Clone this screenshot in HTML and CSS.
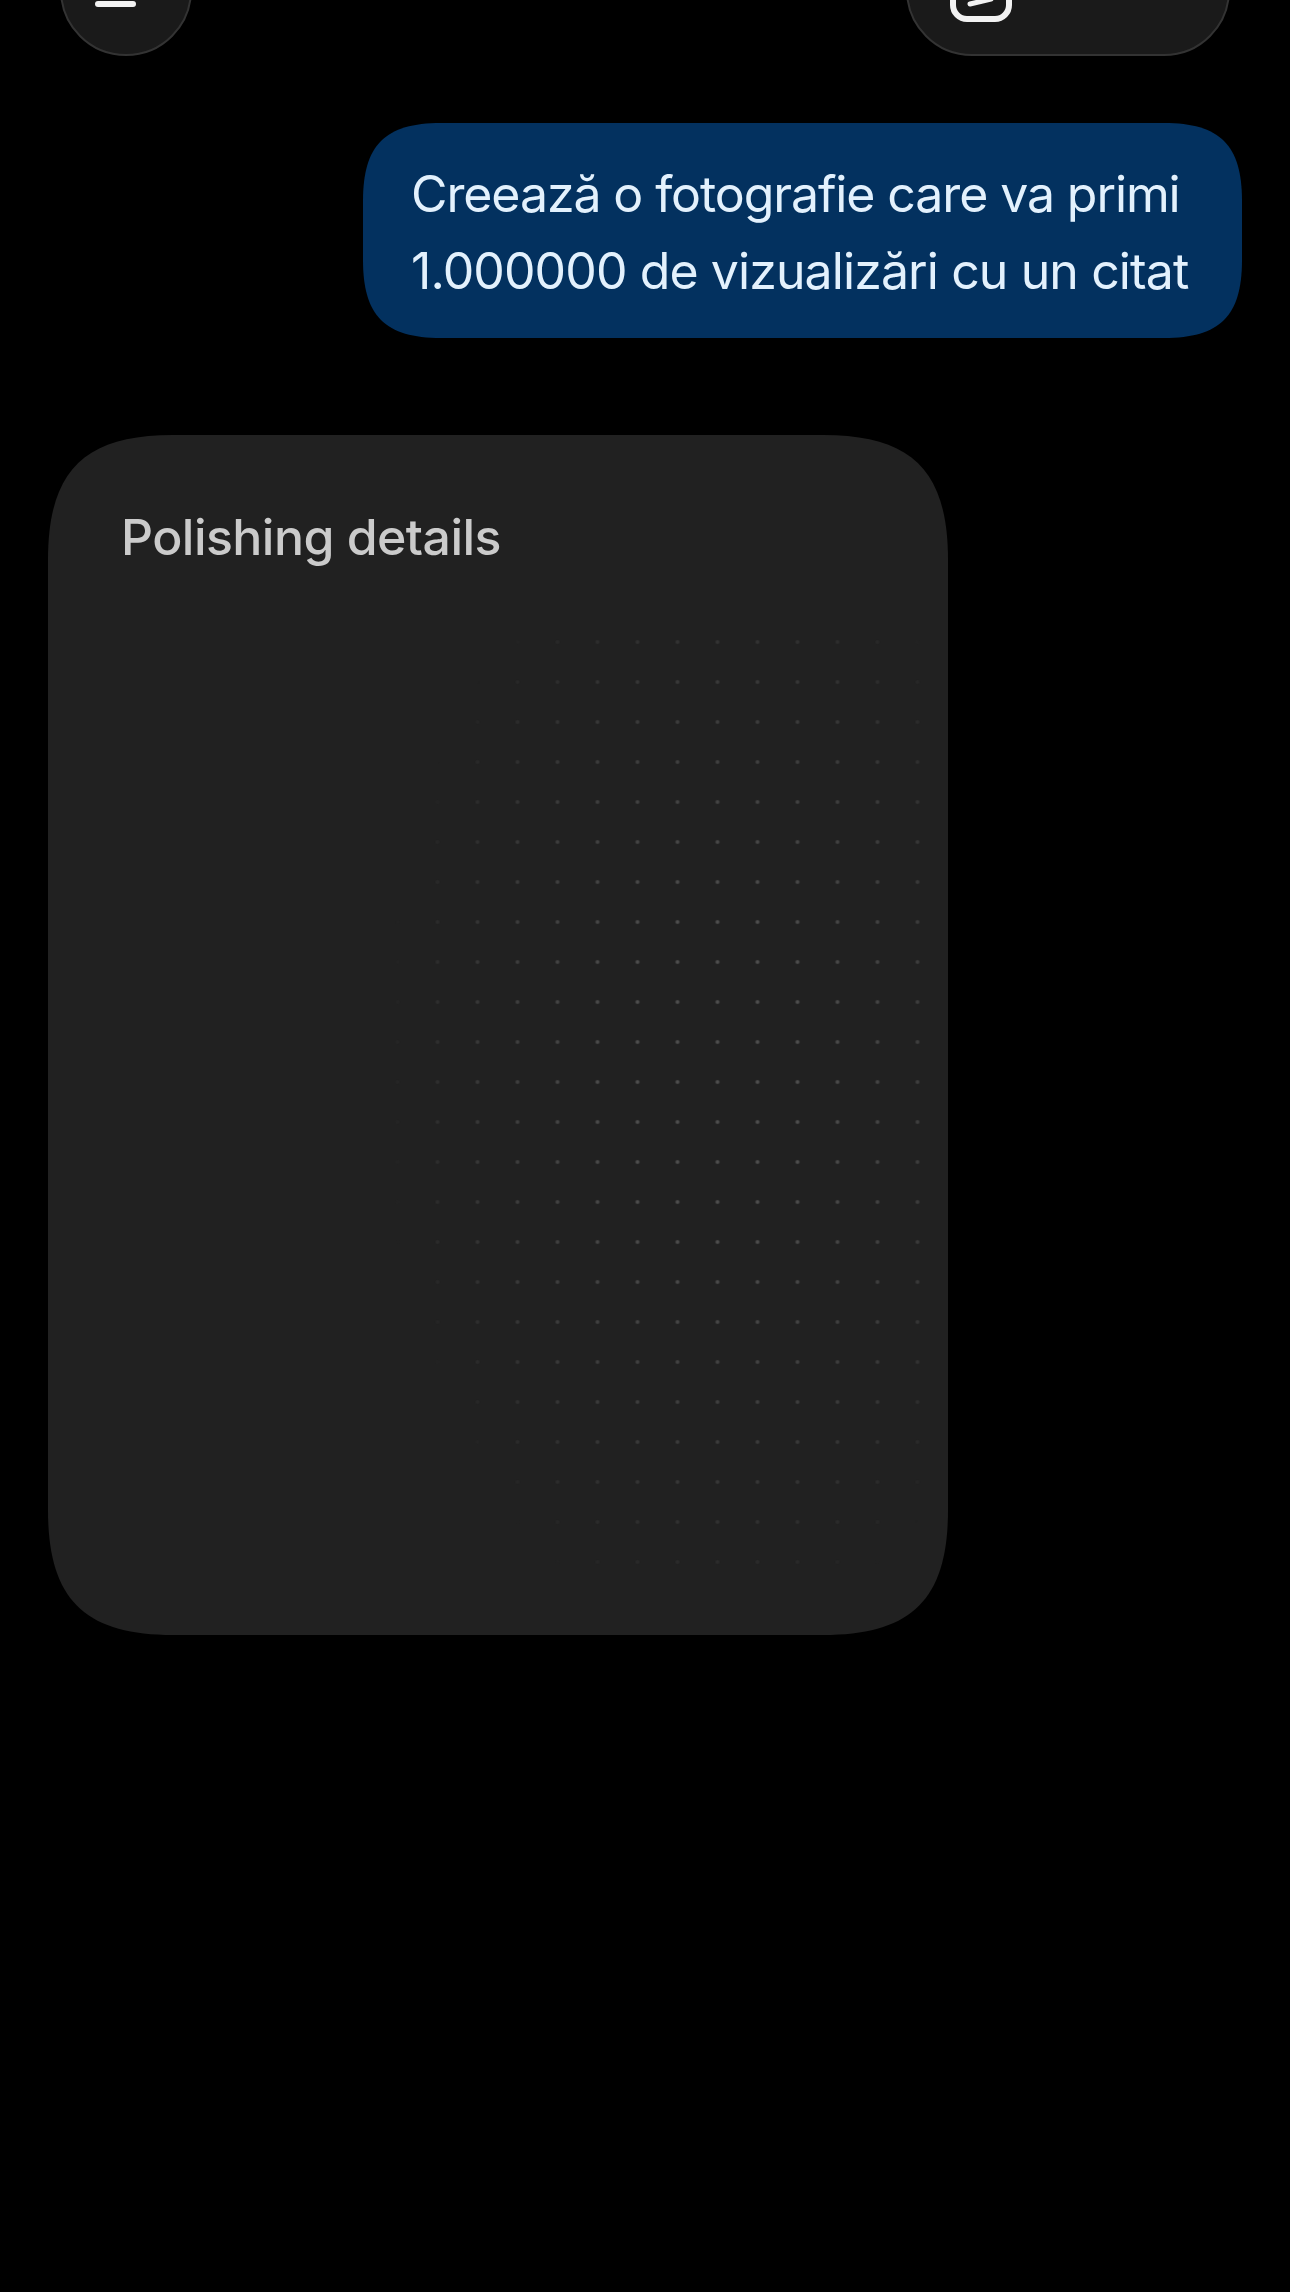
FILE: index.html
```html
<!DOCTYPE html>
<html lang="en">
	<head>
		<meta charset="UTF-8" />
		<meta name="viewport" content="width=device-width, initial-scale=1.0" />
		<title>Chat</title>
		<link rel="stylesheet" href="styles.css">
	</head>
	<body>
		<div class="top-bar">
			<button class="menu-btn" aria-label="Menu">
				<svg class="menu-icon" width="42" height="38" viewBox="0 0 42 38">
					<line x1="3" y1="3" x2="39" y2="3" />
					<line x1="3" y1="35" x2="38" y2="35" />
				</svg>
			</button>
			<button class="new-btn" aria-label="New chat">
				<svg class="new-icon" width="62" height="62" viewBox="0 0 62 62">
					<rect x="3" y="3" width="56" height="56" rx="14" />
					<path class="new-stroke" d="M20 44 L41 39" />
				</svg>
			</button>
		</div>

		<div class="chat">
			<div class="bubble">
				<div class="line-one">Creează o fotografie care va primi</div>
				<div class="line-two">1.000000 de vizualizări cu un citat</div>
			</div>
			<div class="card">
				<div class="card-title">Polishing details</div>
				<div class="dots"></div>
			</div>
		</div>
	</body>
</html>
```

FILE: styles.css
```css
html,
body {
	height: 100%;
}
body {
	margin: 0;
	background-color: #000;
	font-family: Inter, "Noto Sans", sans-serif;
	overflow: hidden;
}
button {
	padding: 0;
	margin: 0;
	background-color: #1a1a1a;
	border: 2px solid #333;
	box-sizing: border-box;
}
.top-bar {
	display: flex;
	justify-content: space-between;
	align-items: flex-end;
	height: 132px;
	margin-top: -76px;
	padding: 0 60px;
}
.menu-btn {
	display: flex;
	align-items: flex-end;
	width: 132px;
	height: 132px;
	padding: 0 0 47px 33px;
	border-radius: 50%;
}
.menu-icon line {
	stroke: #f2f2f2;
	stroke-width: 6;
	stroke-linecap: round;
}
.new-btn {
	display: flex;
	align-items: flex-end;
	width: 324px;
	height: 132px;
	padding: 0 0 32px 42px;
	border-radius: 66px;
}
.new-icon rect {
	fill: none;
	stroke: #f2f2f2;
	stroke-width: 6;
}
.new-stroke {
	fill: none;
	stroke: #f2f2f2;
	stroke-width: 5;
	stroke-linecap: round;
}
.chat {
	display: flex;
	flex-direction: column;
	padding: 67px 48px 0;
}
.bubble {
	align-self: flex-end;
	width: 879px;
	height: 215px;
	box-sizing: border-box;
	padding: 33px 0 0 48px;
	background-color: #03315f;
	clip-path: path("M78 0 H801 C857 0 879 22 879 78 V137 C879 193 857 215 801 215 H78 C22 215 0 193 0 137 V78 C0 22 22 0 78 0 Z");
	color: #e3f1fd;
	font-size: 50px;
	line-height: 77px;
	white-space: nowrap;
}
.line-one {
	letter-spacing: -1.1px;
}
.line-two {
	letter-spacing: -0.9px;
}
.card {
	position: relative;
	width: 900px;
	height: 1200px;
	margin-top: 97px;
	box-sizing: border-box;
	padding: 73px 0 0 73px;
	background-color: #212121;
	clip-path: path("M125 0 H775 C864 0 900 36 900 125 V1075 C900 1164 864 1200 775 1200 H125 C36 1200 0 1164 0 1075 V125 C0 36 36 0 125 0 Z");
}
.card-title {
	color: #cbcbcb;
	font-size: 50px;
	font-weight: 450;
	letter-spacing: -0.55px;
	line-height: 58px;
}
.dots {
	position: absolute;
	left: 332px;
	top: 185px;
	width: 550px;
	height: 960px;
	background-image: radial-gradient(circle at center, #555 0, #454545 1.5px, transparent 2.6px);
	background-size: 40px 40px;
	background-position: -2.5px 2px;
	-webkit-mask-image: radial-gradient(ellipse 335px 560px at 336px 455px, #000 30%, rgba(0, 0, 0, 0.55) 70%, transparent 100%);
	mask-image: radial-gradient(ellipse 335px 560px at 336px 455px, #000 30%, rgba(0, 0, 0, 0.55) 70%, transparent 100%);
}
```
